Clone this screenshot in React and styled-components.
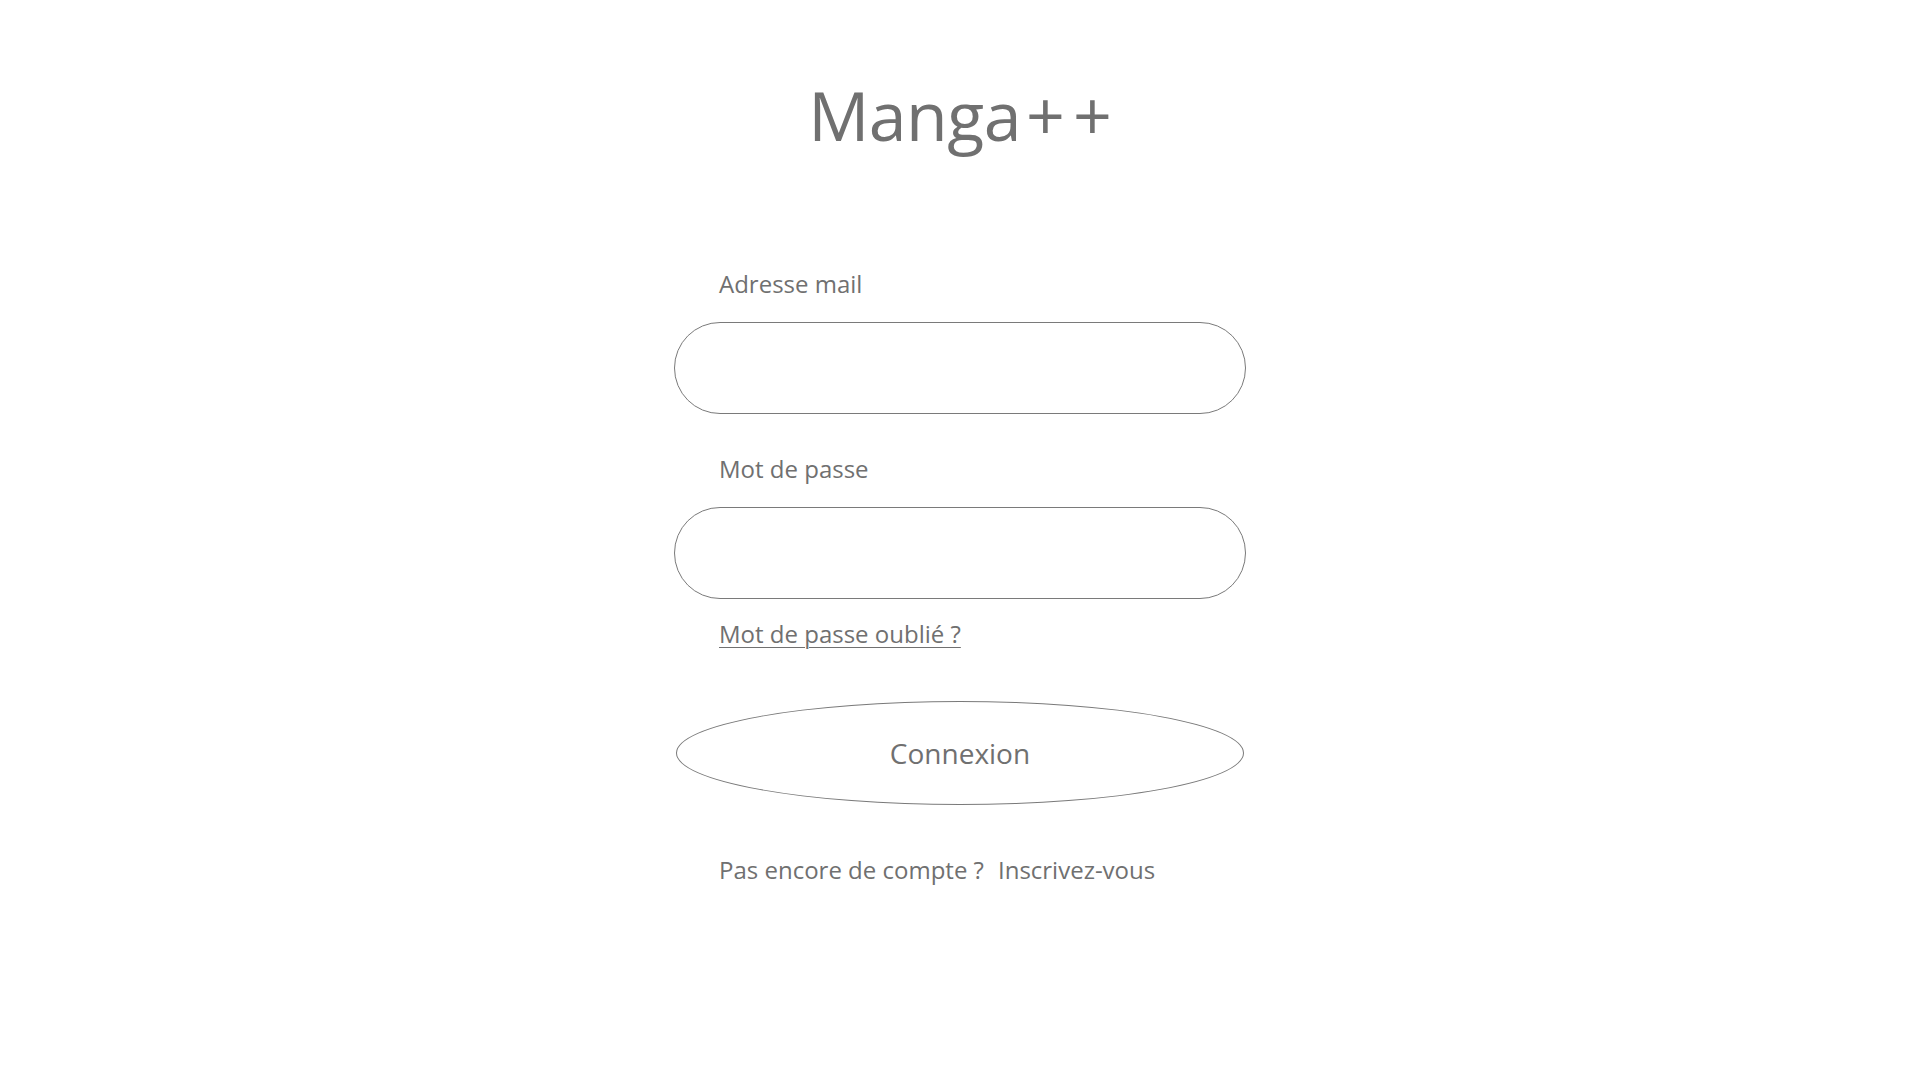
import styled, { createGlobalStyle } from "styled-components";

const GlobalStyle = createGlobalStyle`
    body {
        margin: 0;
        background: #ffffff;
        font-family: 'Open Sans', 'Liberation Sans', sans-serif;
        color: #707070;
    }
`

export default function App() {
    return (
        <>
            <GlobalStyle />
            <Page>
                <Title>
                    Manga<Plus first>+</Plus><Plus>+</Plus>
                </Title>

                <Form onSubmit={(e) => e.preventDefault()}>
                    <Label htmlFor="email" first>Adresse mail</Label>
                    <Field id="email" type="email" />

                    <Label htmlFor="password">Mot de passe</Label>
                    <Field id="password" type="password" />

                    <ForgotLink href="#">Mot de passe oublié ?</ForgotLink>

                    <SubmitButton type="submit">Connexion</SubmitButton>

                    <SignupRow>
                        Pas encore de compte ?
                        <SignupLink href="#">Inscrivez-vous</SignupLink>
                    </SignupRow>
                </Form>
            </Page>
        </>
    )
}

const Page = styled.div`
    display: flex;
    flex-direction: column;
    align-items: center;
    min-height: 100vh;
    padding-top: 75px;
    box-sizing: border-box;
`
const Title = styled.h1`
    margin: 0;
    font-size: 68px;
    line-height: 80px;
    font-weight: 400;
    letter-spacing: -0.5px;
    color: #707070;
`
const Plus = styled.span`
    letter-spacing: 0;
    margin-left: ${({ first }) => (first ? "5px" : "8px")};
`
const Form = styled.form`
    width: 572px;
    display: flex;
    flex-direction: column;
    align-items: stretch;
    margin-top: 113px;
`
const Label = styled.label`
    display: block;
    padding-left: 45px;
    font-size: 24px;
    line-height: 32px;
    color: #707070;
    margin-top: ${({ first }) => (first ? "0" : "39px")};
    margin-bottom: 22px;
`
const Field = styled.input`
    box-sizing: border-box;
    width: 100%;
    height: 92px;
    border: 1px solid #7a7a7a;
    border-radius: 46px;
    padding: 0 45px;
    font-family: inherit;
    font-size: 24px;
    color: #707070;
    background: transparent;
    outline: none;
`
const ForgotLink = styled.a`
    align-self: flex-start;
    margin-top: 19px;
    margin-left: 45px;
    font-size: 24px;
    line-height: 32px;
    color: #707070;
    text-decoration: underline;
    text-decoration-thickness: 1px;
    text-underline-offset: 4px;
`
const SubmitButton = styled.button`
    box-sizing: border-box;
    align-self: center;
    width: 568px;
    height: 104px;
    margin-top: 51px;
    border: 1px solid #7a7a7a;
    border-radius: 50%;
    background: transparent;
    font-family: inherit;
    font-size: 28px;
    color: #707070;
    cursor: pointer;
`
const SignupRow = styled.div`
    display: flex;
    align-items: baseline;
    margin-top: 49px;
    padding-left: 45px;
    font-size: 24px;
    line-height: 32px;
    color: #707070;
`
const SignupLink = styled.a`
    margin-left: 14px;
    color: #707070;
    text-decoration: none;
`
